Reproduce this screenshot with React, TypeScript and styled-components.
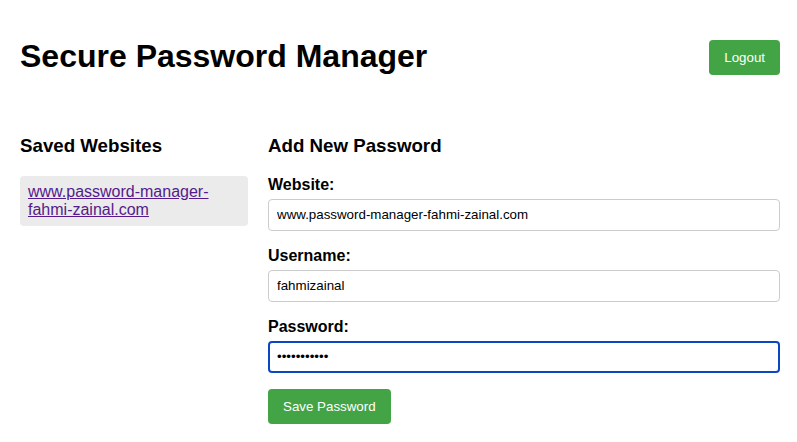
import React from 'react';
import styled, { createGlobalStyle } from 'styled-components';

const GlobalStyle = createGlobalStyle`
    body {
        margin: 0;
        background: #ffffff;
        font-family: "Liberation Sans", Arial, sans-serif;
        color: #000;
    }
`;

const Container = styled.div`
    width: 760px;
    padding: 0 0 20px 20px;
`;

const Header = styled.header`
    display: flex;
    justify-content: space-between;
    align-items: center;
    padding-top: 38px;
    margin-bottom: 60px;
`;

const Title = styled.h1`
    margin: 0;
    font-size: 32px;
    font-weight: bold;
`;

const GreenButton = styled.button<{ $shift?: number }>`
    background: #43a446;
    color: #fff;
    border: none;
    border-radius: 4px;
    padding: 10px 15px;
    font-family: "Liberation Sans", Arial, sans-serif;
    font-size: 13.33px;
    cursor: pointer;
    margin-top: ${props => props.$shift || 0}px;
`;

const Layout = styled.div`
    display: grid;
    grid-template-columns: 228px 1fr;
    column-gap: 20px;
`;

const SectionTitle = styled.h3`
    margin: 0 0 18.72px;
    font-size: 18.72px;
    font-weight: bold;
`;

const SiteList = styled.ul`
    list-style: none;
    margin: 0;
    padding: 0;
`;

const SiteItem = styled.li`
    background: #ebebeb;
    border-radius: 4px;
    padding: 7px 8px;
    font-size: 16px;
`;

const SiteLink = styled.a`
    color: #551a8b;
    text-decoration: underline;
`;

const FormGroup = styled.div`
    margin-bottom: 16px;
`;

const Label = styled.label`
    display: block;
    font-weight: bold;
    font-size: 16px;
    margin-bottom: 5px;
`;

const Input = styled.input<{ $active?: boolean }>`
    display: block;
    width: 100%;
    height: 32px;
    box-sizing: border-box;
    padding: 0 ${props => (props.$active ? 7 : 8)}px;
    font-family: "Liberation Sans", Arial, sans-serif;
    font-size: 13.33px;
    color: #000;
    border: ${props => (props.$active ? '2px solid #0b47c4' : '1px solid #cccccc')};
    border-radius: 4px;
    outline: none;
    caret-color: #000;
`;

const sites = ['www.password-manager-fahmi-zainal.com'];

export default function App() {
    return (
        <>
            <GlobalStyle />
            <Container>
                <Header>
                    <Title>Secure Password Manager</Title>
                    <GreenButton $shift={1}>Logout</GreenButton>
                </Header>
                <Layout>
                    <aside>
                        <SectionTitle>Saved Websites</SectionTitle>
                        <SiteList>
                            {sites.map(site => (
                                <SiteItem key={site}>
                                    <SiteLink href="#">{site.replace('manager-', 'manager-\u200b')}</SiteLink>
                                </SiteItem>
                            ))}
                        </SiteList>
                    </aside>
                    <main>
                        <SectionTitle>Add New Password</SectionTitle>
                        <FormGroup>
                            <Label>Website:</Label>
                            <Input type="text" defaultValue="www.password-manager-fahmi-zainal.com" />
                        </FormGroup>
                        <FormGroup>
                            <Label>Username:</Label>
                            <Input type="text" defaultValue="fahmizainal" />
                        </FormGroup>
                        <FormGroup>
                            <Label>Password:</Label>
                            <Input type="password" defaultValue="secretpass1" $active autoFocus />
                        </FormGroup>
                        <GreenButton>Save Password</GreenButton>
                    </main>
                </Layout>
            </Container>
        </>
    );
}
